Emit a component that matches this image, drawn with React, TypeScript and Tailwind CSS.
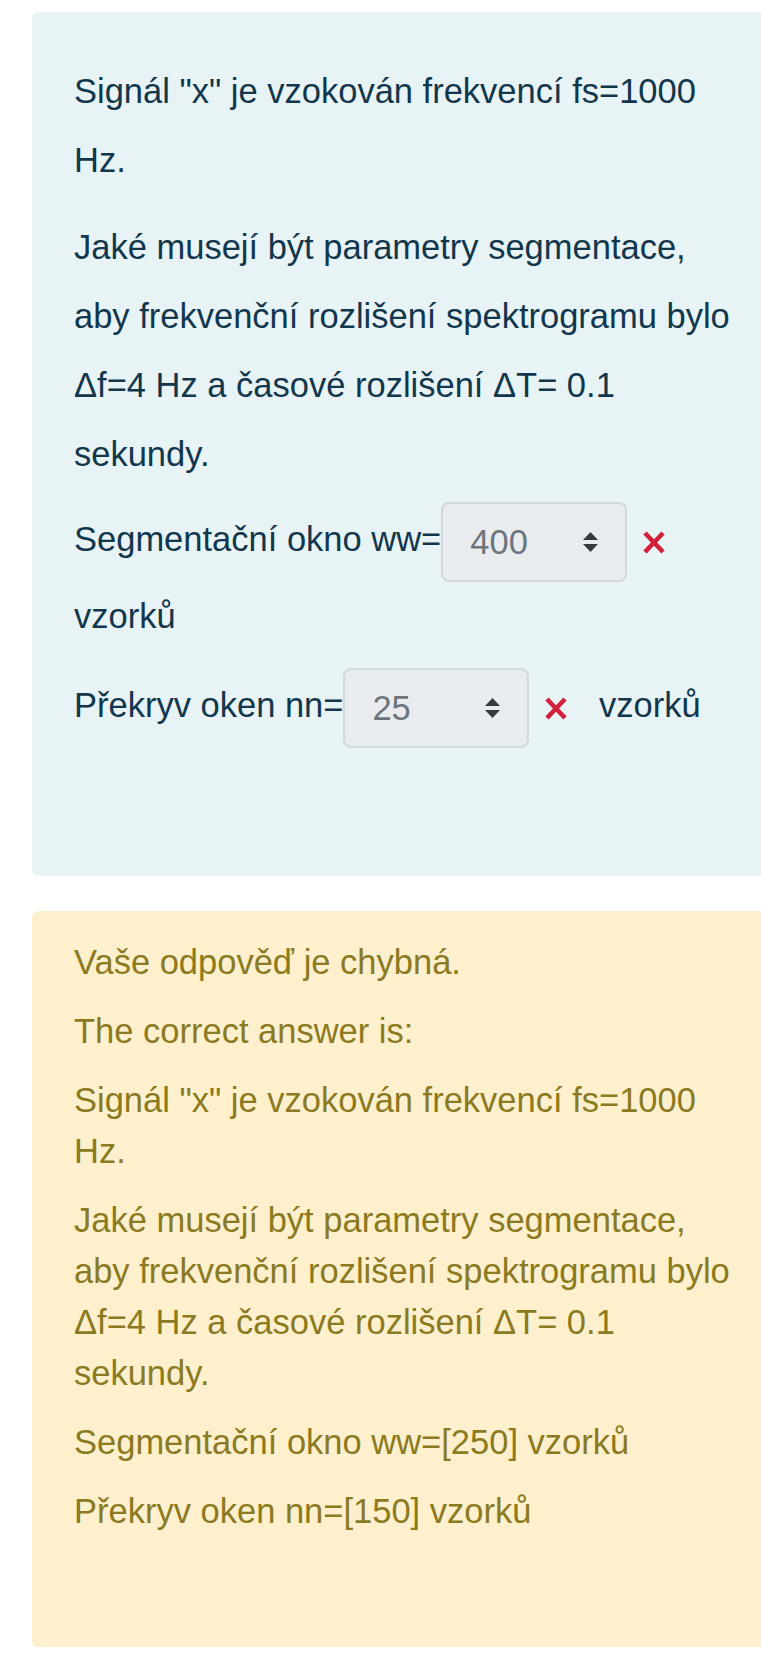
import React from "react";

const font = { fontFamily: '"Liberation Sans", Arial, Helvetica, sans-serif' };

const Spinner = () => (
  <svg width="17" height="20" viewBox="0 0 17 20" aria-hidden="true">
    <path d="M8.5 0 L16 8 L1 8 Z" fill="#343a40" />
    <path d="M1 12 L16 12 L8.5 20 Z" fill="#343a40" />
  </svg>
);

const WrongMark = () => (
  <svg width="22" height="23" viewBox="0 0 22 23" aria-hidden="true" className="inline-block align-middle">
    <path d="M2 2 L20 21 M20 2 L2 21" stroke="#d3203d" strokeWidth="4.6" strokeLinecap="butt" />
  </svg>
);

// disabled number input as the quiz renders it after grading
const NumberBox = ({ value }: { value: string }) => (
  <span className="inline-flex items-center justify-between align-middle w-[186px] h-[80px] pl-[27px] pr-[26px] rounded-lg border-2 border-[#d3d8dd] bg-[#e9ecef] text-[#6c757d] leading-none">
    <span>{value}</span>
    <Spinner />
  </span>
);

export default function App() {
  return (
    <div className="w-full overflow-hidden bg-white pt-[12px] pb-[13px] text-[34.5px]" style={font}>
      {/* question formulation */}
      <div className="ml-[32px] w-[760px] rounded-l-md bg-[#e7f3f5] pl-[42px] pr-[46px] pt-[45px] pb-[128px] leading-[69px] text-[#12374d]">
        <p className="mb-[18px]">Signál "x" je vzokován frekvencí fs=1000 Hz.</p>
        <p className="mb-[13px]">
          Jaké musejí být parametry segmentace, aby frekvenční rozlišení spektrogramu bylo Δf=4 Hz a časové rozlišení ΔT= 0.1 sekundy.
        </p>
        <p className="mb-[17px]">
          Segmentační okno ww=<NumberBox value="400" />
          <span className="ml-[16px]"><WrongMark /></span> vzorků
        </p>
        <p>
          Překryv oken nn=<NumberBox value="25" />
          <span className="ml-[16px]"><WrongMark /></span> <span className="ml-[22px]">vzorků</span>
        </p>
      </div>

      {/* outcome / feedback */}
      <div className="ml-[32px] mt-[35px] w-[760px] rounded-l-md bg-[#fef0cc] pl-[42px] pr-[46px] pt-[26px] pb-[110px] leading-[51px] text-[#8a7a22]">
        <p className="mb-[18px]">Vaše odpověď je chybná.</p>
        <p className="mb-[18px]">The correct answer is:</p>
        <p className="mb-[18px]">Signál "x" je vzokován frekvencí fs=1000 Hz.</p>
        <p className="mb-[18px]">
          Jaké musejí být parametry segmentace, aby frekvenční rozlišení spektrogramu bylo Δf=4 Hz a časové rozlišení ΔT= 0.1 sekundy.
        </p>
        <p className="mb-[18px]">Segmentační okno ww=[250] vzorků</p>
        <p>Překryv oken nn=[150] vzorků</p>
      </div>
    </div>
  );
}
